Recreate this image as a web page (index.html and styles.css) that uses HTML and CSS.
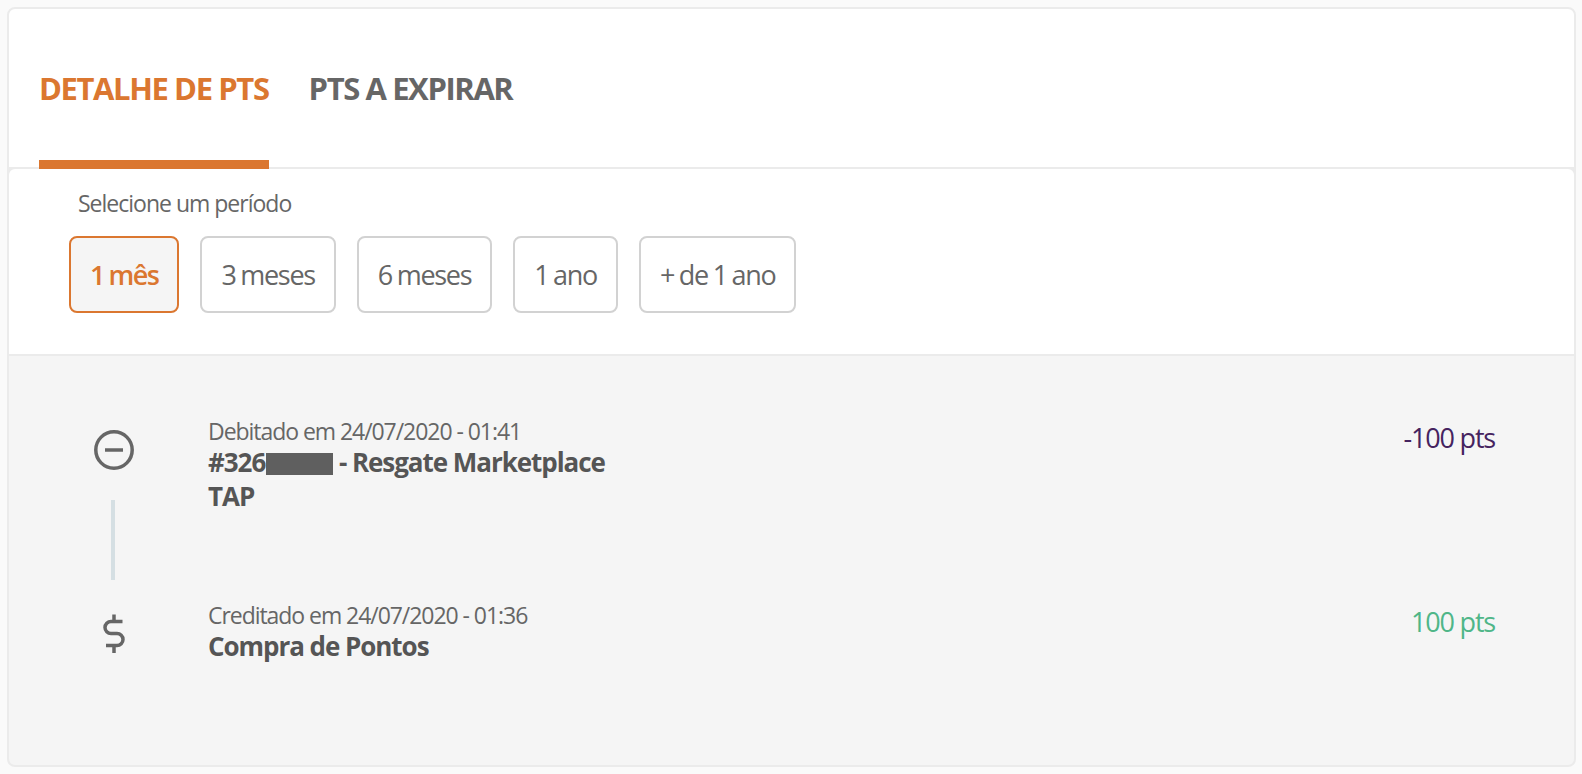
FILE: index.html
```html
<!DOCTYPE html>
<html lang="pt">
<head>
<meta charset="utf-8">
<title>Detalhe de pts</title>
<link rel="stylesheet" href="styles.css">
</head>
<body>
<main class="card">
  <nav class="tabs">
    <a class="tab tab-active">DETALHE DE PTS</a>
    <a class="tab">PTS A EXPIRAR</a>
  </nav>
  <section class="filter">
    <p class="filter-label">Selecione um período</p>
    <div class="periods">
      <button class="period period-active">1 mês</button>
      <button class="period">3 meses</button>
      <button class="period">6 meses</button>
      <button class="period">1 ano</button>
      <button class="period">+ de 1 ano</button>
    </div>
  </section>
  <section class="list">
    <article class="entry entry-first">
      <div class="rail">
        <svg class="icon" width="42" height="42" viewBox="0 0 42 42" fill="none" stroke="#666" stroke-width="3.500"><circle cx="21" cy="21" r="18.200"/><path d="M12 21h18"/></svg>
        <span class="connector"></span>
      </div>
      <div class="info">
        <p class="date">Debitado em 24/07/2020 - 01:41</p>
        <p class="title">#326<span class="redacted"></span> - Resgate Marketplace</p>
        <p class="title">TAP</p>
      </div>
      <p class="pts pts-debit">-100 pts</p>
    </article>
    <article class="entry">
      <div class="rail">
        <svg class="icon" width="42" height="42" viewBox="0 0 42 42" fill="none" stroke="#666" stroke-width="3.500"><path d="M29.500 8.500H18a6 6 0 0 0 0 12h6a6 6 0 0 1 0 12H13"/><path d="M21 1.500v7M21 32.500v7.500"/></svg>
      </div>
      <div class="info">
        <p class="date">Creditado em 24/07/2020 - 01:36</p>
        <p class="title">Compra de Pontos</p>
      </div>
      <p class="pts pts-credit">100 pts</p>
    </article>
  </section>
</main>
</body>
</html>
```

FILE: styles.css
```css
* { box-sizing: border-box; }
html, body { height: 100%; }
body {
  margin: 0;
  background: #fafafa;
  padding: 7px 6px 7px 7px;
  font-family: "Open Sans", "Noto Sans", sans-serif;
  color: #666;
}
p { margin: 0; }
.card {
  height: 760px;
  display: flex;
  flex-direction: column;
  background: #ebebeb;
  border: 2px solid #ebebeb;
  border-radius: 8px;
  overflow: hidden;
}
.tabs {
  height: 160px;
  flex: none;
  display: flex;
  gap: 40px;
  padding-left: 30px;
  background: #fff;
  border-bottom: 2px solid #ebebeb;
}
.tab {
  height: 161px;
  padding-top: 57px;
  font-size: 31px;
  line-height: 44px;
  font-weight: 700;
  letter-spacing: -1.400px;
  white-space: nowrap;
  color: #666;
}
.tab-active {
  color: #db7730;
  border-bottom: 10px solid #db7730;
}
.filter {
  height: 187px;
  flex: none;
  padding: 19px 0 0 60px;
  background: #fff;
  border-bottom: 2px solid #ebebeb;
  border-radius: 6px 6px 0 0;
}
.filter-label {
  margin-left: 9px;
  font-size: 23px;
  line-height: 30px;
  letter-spacing: -1px;
}
.periods {
  display: flex;
  gap: 21px;
  margin-top: 18px;
}
.period {
  height: 77px;
  padding: 0 19px;
  background: #fff;
  border: 2px solid #d2d2d2;
  border-radius: 8px;
  font-family: inherit;
  font-size: 27px;
  letter-spacing: -1.300px;
  word-spacing: -1px;
  color: #666;
}
.period-active {
  background: #f5f5f5;
  border-color: #db7730;
  color: #db7730;
  font-weight: 600;
  letter-spacing: -1.500px;
}
.list {
  flex: 1;
  background: #f5f5f5;
  padding-top: 58px;
}
.entry {
  display: flex;
  align-items: flex-start;
  padding: 0 79px 0 84px;
}
.entry-first { height: 184px; }
.rail {
  width: 115px;
  flex: none;
  display: flex;
  flex-direction: column;
}
.icon { display: block; margin-top: 15px; }
.connector {
  display: block;
  width: 4px;
  height: 80px;
  margin: 29px 0 0 18px;
  background: #d5dfe3;
}
.info { flex: 1; padding-top: 3px; }
.date {
  font-size: 23px;
  line-height: 28px;
  letter-spacing: -1.050px;
}
.title {
  font-size: 26px;
  line-height: 34px;
  font-weight: 700;
  letter-spacing: -1.050px;
  color: #555;
}
.redacted {
  display: inline-block;
  width: 67px;
  height: 22px;
  margin-left: 1px;
  vertical-align: -3px;
  background: #5f5f5f;
}
.pts {
  margin-top: 7px;
  font-size: 27px;
  line-height: 34px;
  font-weight: 500;
  letter-spacing: -1.200px;
}
.pts-debit { color: #45235f; }
.pts-credit { color: #4fb688; }
```
